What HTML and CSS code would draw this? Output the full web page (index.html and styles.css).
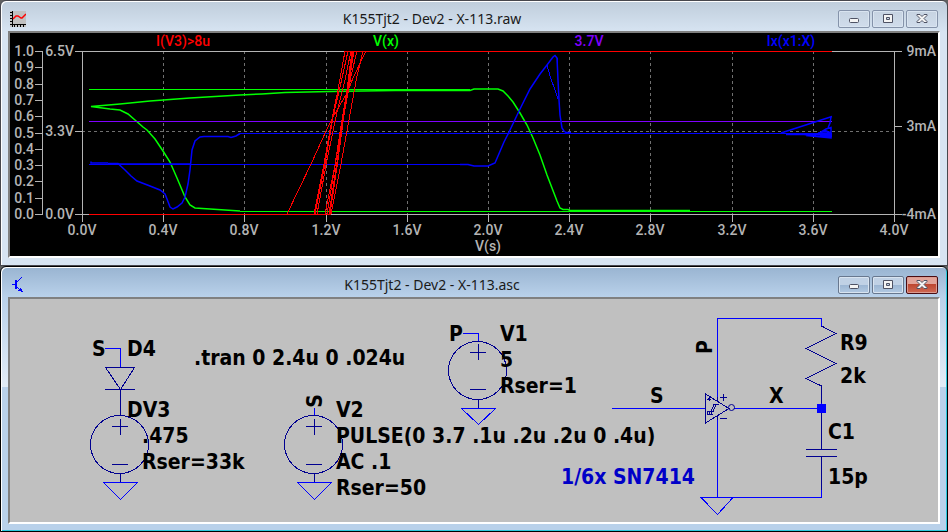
FILE: index.html
```html
<!DOCTYPE html>
<html lang="en">
<head>
    <meta charset="UTF-8">
    <meta name="viewport" content="width=device-width, initial-scale=1.0">
    <title>K155Tjt2 - Dev2 - X-113</title>
    <link rel="stylesheet" href="styles.css">
</head>
<body>

    <section class="window">
        <header class="titlebar">
            <svg class="icon" viewBox="0 0 16 16" aria-hidden="true">
                <rect width="16" height="16" fill="#c0c0c0"/>
                <path d="M2.5 0V16M0 13.5H16M0 1.5H2M0 4.5H2M0 7.5H2M0 10.5H2M4.5 14V16M7.5 14V16M10.5 14V16M13.5 14V16" stroke="#000" fill="none"/>
                <path class="smooth" d="M3 8L6 5H8L11 7H12L16 3" stroke="#f00" stroke-width="1.5" fill="none"/>
            </svg>
            <h1 class="title">K155Tjt2 - Dev2 - X-113.raw</h1>
            <div class="buttons">
                <button class="btn" type="button" aria-label="Minimize">
                    <svg class="glyph" viewBox="0 0 12 12"><rect x="1.5" y="5.500" width="9" height="4" rx="1"/></svg>
                </button>
                <button class="btn" type="button" aria-label="Maximize">
                    <svg class="glyph" viewBox="0 0 12 12"><path fill-rule="evenodd" d="M1.500 1.500H10.500V9.500H1.500ZM4.500 4.500H7.500V6.500H4.500Z"/></svg>
                </button>
                <button class="btn" type="button" aria-label="Close">
                    <svg class="glyph" viewBox="0 0 12 12"><path d="M1 1.500H4L6 3.500L8 1.500H11V2.500L8 5.500L11 8.500V9.500H8L6 7.500L4 9.500H1V8.500L4 5.500L1 2.500Z"/></svg>
                </button>
            </div>
        </header>
        <main class="client">
            <svg class="plot" viewBox="10 33 928 223" role="img" aria-label="Waveforms">
                <!-- grid -->
                <path class="grid" d="M163.500 51V214M244.500 51V214M326.500 51V214M407.500 51V214M488.500 51V214M569.500 51V214M650.500 51V214M732.500 51V214M813.500 51V214M82 131.500H894"/>
                <!-- axes and ticks -->
                <path class="axis" d="M82.500 51V222M75 51.500H902M75 214.500H902M894.500 51V222M75 131.500H82M894 126.500H902"/>
                <path class="axis" d="M163.500 214V222M244.500 214V222M326.500 214V222M407.500 214V222M488.500 214V222M569.500 214V222M650.500 214V222M732.500 214V222M813.500 214V222"/>
                <path class="axis" d="M42.500 51V215M35 51.500H42M35 67.500H42M35 84.500H42M35 100.500H42M35 116.500H42M35 133.500H42M35 149.500H42M35 165.500H42M35 181.500H42M35 198.500H42M35 214.500H42"/>

                <!-- V(x) -->
                <path class="trace green" d="M89 89.500H470M240 211.500H832"/>
                <path class="trace curve green" d="M240 211L210 209L195 208L190 205L185 197L177 178L170 162L163 151L155 139L147 130L143 127L135 120L128 114L120 110L110 109L91 106.500L120 104L150 101L190 98L240 95L262 94L285 92.500L330 91.500L395 90.500H470L474 89H498L503 91L508 96L513 102L520 113L527 125L533 138L540 155L547 175L552 188L557 201L560 208L563 209.500H568L570 210.500H690"/>
                <!-- 3.7V -->
                <path class="trace purple" d="M89 121.500H832"/>
                <!-- Ix(x1:X) -->
                <path class="trace blue" d="M89 164.500H468M240 133.500H832"/>
                <path class="trace curve blue" d="M91 161.500V163H108M108 164H190M460 164.500H468L474 166H488L495 163L498 156L504 142L510 130L520 109L530 89L540 74L547 65L553 57L555 55.500L557 58L558 80L559 100L560 115L562 128L564 131L566 132.500H571"/>
                <path class="trace blue" d="M547 65L551 79L555 90L558 99M557.500 58V75"/>
                <path class="trace curve blue" d="M108 163.500H118L125 170L131 176L137 181L150 186L160 190L165 194L167 199L170 207L173 209L177 207L182 203L185 197L188 184L190 170L192 150L195 141L200 137L204 136.500H228L231 137.500L236 136L240 133.500"/>
                <path class="trace curve blue" d="M781 133L832 116.500M831 117L830 123L828 128M786 134.500H832M818 134L826 129L831 127.500V138L806 135.500M800 134L816 136L832 136.500M820 135.500H832M818 133L828 133V137M824 130L831 133"/>
                <!-- I(V3)>8u -->
                <path class="trace red" d="M89 214.500H331M345 51.500H832"/>
                <path class="trace red" d="M287 214L312 162L326 131L333 117L347 93L353 78L366 51"/>
                <path class="trace red" d="M314 214L324 164L332 119L338 90L345 51M315 214L325 164L333 117L340 87L348 51M317 214L327 160L337 112L345 80L351 51"/>
                <path class="trace red" d="M325 214L335 165L341 126L347 90L352 51M327 214L336 160L342 126L348 88L353 51M329 214L337 162L343 120L349 82L354 51M330 214L338 160L344 115L351 76L357 51M331 214L341 164L349 120L357 76L363 51"/>

                <g class="label mid">
                    <text class="red" x="183" y="46">I(V3)&gt;8u</text>
                    <text class="green" x="386" y="46">V(x)</text>
                    <text class="purple" x="589" y="46">3.7V</text>
                    <text class="blue" x="791" y="46">Ix(x1:X)</text>
                    <text x="82" y="235">0.0V</text>
                    <text x="163" y="235">0.4V</text>
                    <text x="244" y="235">0.8V</text>
                    <text x="326" y="235">1.2V</text>
                    <text x="407" y="235">1.6V</text>
                    <text x="488" y="235">2.0V</text>
                    <text x="569" y="235">2.4V</text>
                    <text x="650" y="235">2.8V</text>
                    <text x="732" y="235">3.2V</text>
                    <text x="813" y="235">3.6V</text>
                    <text x="894" y="235">4.0V</text>
                    <text x="488" y="251">V(s)</text>
                </g>
                <g class="label end">
                    <text x="34" y="56">1.0</text>
                    <text x="34" y="72">0.9</text>
                    <text x="34" y="89">0.8</text>
                    <text x="34" y="105">0.7</text>
                    <text x="34" y="121">0.6</text>
                    <text x="34" y="138">0.5</text>
                    <text x="34" y="154">0.4</text>
                    <text x="34" y="170">0.3</text>
                    <text x="34" y="186">0.2</text>
                    <text x="34" y="203">0.1</text>
                    <text x="34" y="219">0.0</text>
                    <text x="74" y="56">6.5V</text>
                    <text x="74" y="136">3.3V</text>
                    <text x="74" y="219">0.0V</text>
                    <text x="936" y="56">9mA</text>
                    <text x="936" y="131">3mA</text>
                    <text x="936" y="219">-4mA</text>
                </g>
            </svg>
        </main>
    </section>

    <section class="window active">
        <header class="titlebar">
            <svg class="icon" viewBox="0 0 16 16" aria-hidden="true">
                <path d="M2 7.500H5" stroke="#00f" fill="none"/>
                <path d="M6 3V12" stroke="#00f" stroke-width="2" fill="none"/>
                <path d="M6 6L12 0M6 9L12 15" stroke="#00f" fill="none"/>
                <path d="M13 15.500L8 13.500L11 10.500Z" fill="#00f"/>
            </svg>
            <h1 class="title">K155Tjt2 - Dev2 - X-113.asc</h1>
            <div class="buttons">
                <button class="btn" type="button" aria-label="Minimize">
                    <svg class="glyph" viewBox="0 0 12 12"><rect x="1.5" y="5.500" width="9" height="4" rx="1"/></svg>
                </button>
                <button class="btn" type="button" aria-label="Maximize">
                    <svg class="glyph" viewBox="0 0 12 12"><path fill-rule="evenodd" d="M1.500 1.500H10.500V9.500H1.500ZM4.500 4.500H7.500V6.500H4.500Z"/></svg>
                </button>
                <button class="btn close" type="button" aria-label="Close">
                    <svg class="glyph" viewBox="0 0 12 12"><path d="M1 1.500H4L6 3.500L8 1.500H11V2.500L8 5.500L11 8.500V9.500H8L6 7.500L4 9.500H1V8.500L4 5.500L1 2.500Z"/></svg>
                </button>
            </div>
        </header>
        <main class="client">
            <svg class="schematic" viewBox="10 299 928 223" role="img" aria-label="Schematic">
                <!-- wires and grounds -->
                <path class="wire" d="M105 348.500H120.500V367M314.500 408V415M463 333.500H478.500V341"/>
                <path class="wire" d="M103.500 482.500H137.500L120.500 499.500ZM297.500 482.500H331.500L314.500 499.500ZM461.500 408.500H495.500L478.500 424.500Z"/>
                <path class="wire" d="M612 408.500H705M734 408.500H821M717.500 401V318.500H821.500V326M717.500 417V497M821.500 490V497.500H701L717.500 514.500L733 497.500M821.500 400V420"/>
                <rect class="node" x="817" y="404" width="9" height="9"/>

                <!-- D4 -->
                <path class="part" d="M105.500 367.500H134.500L120.500 389.500ZM105 389.500H135M120.500 389V415"/>
                <!-- V3 -->
                <circle class="part" cx="119.500" cy="444.500" r="29"/>
                <path class="part" d="M112 426.500H128M120.500 419V435M112 464.500H128M120.500 474V482"/>
                <!-- V2 -->
                <circle class="part" cx="313.500" cy="444.500" r="29"/>
                <path class="part" d="M306 426.500H322M314.500 419V435M306 464.500H322M314.500 474V482"/>
                <!-- V1 -->
                <circle class="part" cx="477.500" cy="370.500" r="29"/>
                <path class="part" d="M470 352.500H486M478.500 344V360M470 389.500H486M478.500 400V408"/>
                <!-- inverter -->
                <path class="part" d="M705.500 394V423L729 408.500ZM720 397.500H727M723.500 394V401M720 418.500H727M717.500 397V401M717.500 415V420"/>
                <path class="part" d="M707 411.500H713L716 404.500H719M711 411.500L714 404.500H717M707 414.500H713M707.500 412V415M709.500 412V415M711.500 412V415M707 399.500H710M709.500 397V401M708 398L711 400"/>
                <circle class="part smooth" cx="731.500" cy="407.500" r="3"/>
                <!-- R9 -->
                <path class="part" d="M821.500 326L836 333.500L806 348.500L836 363.500L806 378.500L821.500 386V403"/>
                <!-- C1 -->
                <path class="part" d="M821.500 413V449M806 449.500H837M806 456.500H837M821.500 456V490"/>

                <g class="text">
                    <text x="92" y="356">S</text>
                    <text x="127" y="356">D4</text>
                    <text x="127" y="417">DV3</text>
                    <text x="142" y="443">.475</text>
                    <text x="142" y="469">Rser=33k</text>
                    <text x="194" y="365">.tran 0 2.4u 0 .024u</text>
                    <text class="mid" transform="translate(322 401) rotate(-90)">S</text>
                    <text x="336" y="417">V2</text>
                    <text x="336" y="443">PULSE(0 3.7 .1u .2u .2u 0 .4u)</text>
                    <text x="336" y="469">AC .1</text>
                    <text x="336" y="495">Rser=50</text>
                    <text x="449" y="341">P</text>
                    <text x="500" y="341">V1</text>
                    <text x="500" y="367">5</text>
                    <text x="500" y="393">Rser=1</text>
                    <text x="650" y="403">S</text>
                    <text class="mid" transform="translate(712 347) rotate(-90)">P</text>
                    <text x="769" y="403">X</text>
                    <text x="840" y="350">R9</text>
                    <text x="840" y="383">2k</text>
                    <text x="828" y="439">C1</text>
                    <text x="828" y="484">15p</text>
                    <text class="note" x="561" y="484">1/6x SN7414</text>
                </g>
            </svg>
        </main>
    </section>

</body>
</html>
```
FILE: styles.css
```css
body {
    margin: 0;
    background-color: #606060;
    font-family: "Noto Sans", "Open Sans", sans-serif;
}
.window {
    box-sizing: border-box;
    padding: 0 7px 7px;
    border: 1px solid #47474d;
    border-radius: 6px 6px 0 0;
    background: linear-gradient(#bfcddb, #d7e4f2 31px);
    box-shadow: inset 1px 1px 0 #fff;
}
.window.active {
    border-color: #000;
    background:
        linear-gradient(#99b4d1, #b9d1ea) top / 100% 30px no-repeat,
        linear-gradient(#b9d1ea, #e2ecf6) 0 30px / 100% 90px no-repeat,
        #b9d1ea;
    box-shadow: inset 1px 1px 0 #fff, inset -1px -1px 0 #2bc9dd;
}
.titlebar {
    display: flex;
    align-items: center;
    height: 30px;
    padding: 0 2px;
}
.icon {
    width: 16px;
    height: 16px;
    margin-top: 6px;
    shape-rendering: crispEdges;
}
.title {
    flex: 1;
    margin: 6px 0 0;
    color: #1a1a1a;
    font-size: 14px;
    font-weight: normal;
    line-height: 20px;
    text-align: center;
}
.buttons {
    display: flex;
    gap: 2px;
    margin-top: 6px;
}
.btn {
    display: flex;
    align-items: center;
    justify-content: center;
    width: 32px;
    height: 18px;
    padding: 0;
    border: 1px solid #8593aa;
    border-radius: 2px;
    background: linear-gradient(#c6d3e1, #d0dceb);
    box-shadow: inset 0 0 0 1px #d9e4f0;
}
.active .btn {
    border-color: #68788f;
    background: linear-gradient(#c0d1e5 50%, #9cb6d3 50%, #b2c9e2);
}
.active .close {
    border-color: #4a0c12;
    background: linear-gradient(#e2a49a 45%, #bd4630 45%, #cf6a55);
    box-shadow: inset 0 0 0 1px #dc9b90;
}
.glyph {
    width: 12px;
    height: 12px;
    fill: #f4f4f4;
    stroke: #4e5264;
}
.client {
    border: 2px solid;
    border-color: #808080 #fff #fff #808080;
}
.plot,
.schematic {
    display: block;
    width: 100%;
    height: auto;
    shape-rendering: crispEdges;
}
.plot {
    background-color: #000;
}
.schematic {
    background-color: #c0c0c0;
}
.smooth {
    shape-rendering: auto;
}
.grid {
    fill: none;
    stroke: #707070;
    stroke-dasharray: 3 3;
}
.axis {
    fill: none;
    stroke: #b4b4b4;
}
.trace {
    fill: none;
}
.curve {
    stroke-width: 1.5;
    shape-rendering: auto;
}
.trace.red {
    stroke: #f00;
}
.trace.green {
    stroke: #0f0;
}
.trace.blue {
    stroke: #00f;
}
.trace.purple {
    stroke: #8000ff;
}
.label {
    fill: #b4b4b4;
    font-family: Roboto, "Liberation Sans", sans-serif;
    font-size: 14px;
    font-weight: 500;
}
.label .red {
    fill: #f00;
}
.label .green {
    fill: #0f0;
}
.label .blue {
    fill: #00f;
}
.label .purple {
    fill: #8000ff;
}
.mid {
    text-anchor: middle;
}
.end {
    text-anchor: end;
}
.wire {
    fill: none;
    stroke: #00f;
}
.node {
    fill: #00f;
}
.part {
    fill: none;
    stroke: #000090;
}
.text {
    fill: #000;
    font-family: "DejaVu Sans Condensed", "DejaVu Sans", sans-serif;
    font-size: 21px;
    font-weight: bold;
}
.text .note {
    fill: #0000c8;
}
```
